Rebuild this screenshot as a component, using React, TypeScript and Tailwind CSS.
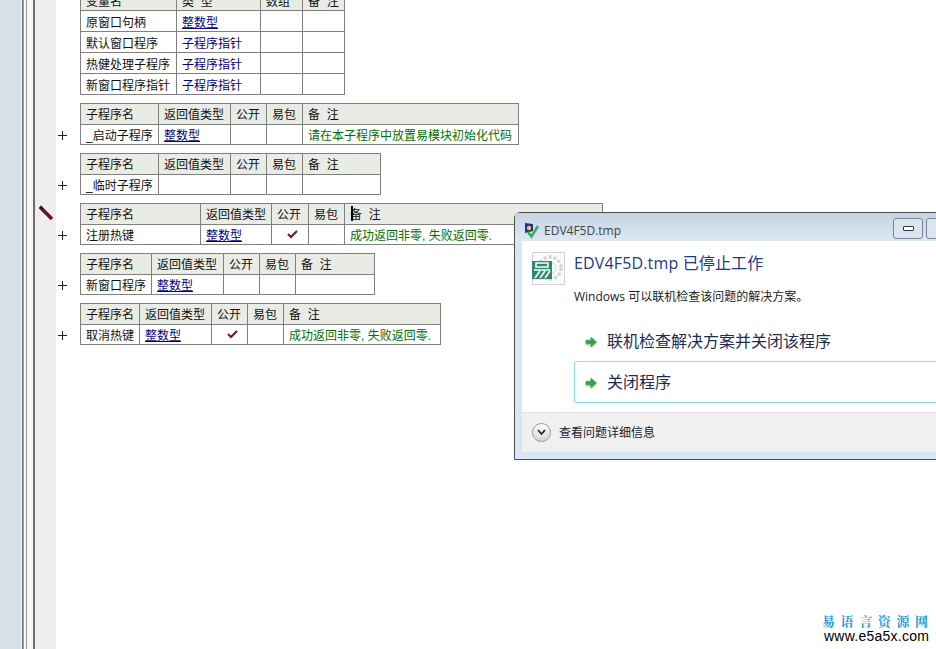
const font = "font-['Liberation_Sans','Noto_Sans_CJK_SC',sans-serif]";

type Cell = { text?: string; kind?: "type" | "typeLink" | "note" | "check" };

function Plus() {
  return (
    <svg width="9" height="9" viewBox="0 0 9 9" className="mb-[5px] ml-[2px]">
      <path d="M0 4.500h9M4.500 0v9" stroke="#1a1a5e" strokeWidth="1" />
    </svg>
  );
}

function Check() {
  return (
    <svg width="11" height="9" viewBox="0 0 11 9" className="mx-auto -mt-[2px]">
      <path d="M1 4l3 3 6-6" fill="none" stroke="#6e1420" strokeWidth="2" />
    </svg>
  );
}

function CellBody({ cell }: { cell: Cell }) {
  if (cell.kind === "check") return <Check />;
  if (cell.kind === "typeLink") return <span className="text-[#000080] underline">{cell.text}</span>;
  if (cell.kind === "type") return <span className="text-[#000080]">{cell.text}</span>;
  if (cell.kind === "note") return <span className="text-[#007000]">{cell.text}</span>;
  return <span>{cell.text}</span>;
}

function Grid({ cols, head, rows, pad }: { cols: string[]; head: string[]; rows: Cell[][]; pad: string }) {
  return (
    <table className="table-fixed border-collapse text-[12px] leading-none text-[#111]">
      <colgroup>
        {cols.map((c, i) => (
          <col key={i} className={c} />
        ))}
      </colgroup>
      <thead>
        <tr className="h-[21px] bg-[#e8ece5]">
          {head.map((h, i) => (
            <th key={i} className={`overflow-hidden border border-[#808080] pl-[5px] text-left font-normal whitespace-pre ${pad}`}>
              {h}
            </th>
          ))}
        </tr>
      </thead>
      <tbody>
        {rows.map((r, i) => (
          <tr key={i} className={rows.length > 1 ? "h-[21px]" : "h-[20px]"}>
            {r.map((c, j) => (
              <td key={j} className={`overflow-hidden border border-[#808080] pl-[5px] whitespace-pre ${pad}`}>
                <CellBody cell={c} />
              </td>
            ))}
          </tr>
        ))}
      </tbody>
    </table>
  );
}

const subHead = ["子程序名", "返回值类型", "公开", "易包", "备  注"];
const success = "成功返回非零, 失败返回零.";

const blocks = [
  {
    cols: ["w-[78px]", "w-[72px]", "w-[36px]", "w-[36px]", "w-[216px]"],
    name: "_启动子程序",
    pub: false,
    note: "请在本子程序中放置易模块初始化代码",
    type: "整数型",
  },
  {
    cols: ["w-[78px]", "w-[72px]", "w-[36px]", "w-[36px]", "w-[78px]"],
    name: "_临时子程序",
    pub: false,
    note: "",
    type: "",
  },
  {
    cols: ["w-[120px]", "w-[71px]", "w-[37px]", "w-[36px]", "w-[258px]"],
    name: "注册热键",
    pub: true,
    note: success,
    type: "整数型",
  },
  {
    cols: ["w-[71px]", "w-[72px]", "w-[36px]", "w-[36px]", "w-[79px]"],
    name: "新窗口程序",
    pub: false,
    note: "",
    type: "整数型",
  },
  {
    cols: ["w-[59px]", "w-[72px]", "w-[36px]", "w-[36px]", "w-[157px]"],
    name: "取消热键",
    pub: true,
    note: success,
    type: "整数型",
  },
];

function Rail() {
  return (
    <div className="flex h-full shrink-0">
      <div className="w-[21px] bg-[#d8e0ea]" />
      <div className="w-[1px] bg-[#f7f7f7]" />
      <div className="w-[1px] bg-[#6e6e6e]" />
      <div className="w-[1px] bg-[#a0a0a0]" />
      <div className="w-[2px] bg-[#fbfbfb]" />
      <div className="w-[1px] bg-[#9a9a9a]" />
      <div className="w-[6px] bg-[#f6f8f6]" />
      <div className="w-[2px] bg-[#6e6e6e]" />
      <div className="w-[21px] bg-[#eeeeee]" />
    </div>
  );
}

function Pencil() {
  return (
    <svg width="16" height="16" viewBox="0 0 16 16" className="absolute top-[205px] left-[38px]">
      <path d="M2 2l12 12" stroke="#6a1018" strokeWidth="3.600" />
      <path d="M2 1.500l3 3" stroke="#222" strokeWidth="2.600" />
    </svg>
  );
}

function AppIcon() {
  return (
    <svg width="33" height="33" viewBox="0 0 33 33" className="shrink-0">
      <rect x="0.500" y="0.500" width="32" height="32" fill="#fbfbfb" stroke="#d2d2d2" />
      <circle cx="18" cy="16" r="11" fill="none" stroke="#d4d4d4" strokeWidth="3.500" strokeDasharray="3 2" />
      <circle cx="18" cy="16" r="6" fill="none" stroke="#e2e2e2" strokeWidth="1.500" />
      <rect x="0" y="9" width="20" height="18" fill="#2a8a72" />
      <path d="M4 11h12v4H4z" fill="none" stroke="#fff" strokeWidth="1.500" />
      <path d="M2 18h16M3 26l5-7M8 26l5-7M13 26l5-7" fill="none" stroke="#fff" strokeWidth="1.700" />
    </svg>
  );
}

function TitleIcon() {
  return (
    <svg width="16" height="16" viewBox="0 0 16 16" className="shrink-0">
      <path d="M1 0l8 1v7l-8 2z" fill="#1f2f96" />
      <circle cx="5" cy="5" r="2.200" fill="#f2c53a" />
      <path d="M4 9l3.500 4.500L14 3" fill="none" stroke="#3fae5a" strokeWidth="2.600" />
    </svg>
  );
}

function GreenArrow() {
  return (
    <svg width="12" height="12" viewBox="0 0 12 12" className="shrink-0 drop-shadow-[0_1px_1px_rgba(0,0,0,0.3)]">
      <path d="M1 4.200h5V1.200L11.500 6 6 10.800V7.800H1z" fill="#2aa84a" stroke="#2aa84a" strokeWidth="0.600" />
    </svg>
  );
}

function Dialog() {
  return (
    <div className="absolute top-[212px] left-[514px] flex h-[248px] w-[520px] flex-col rounded-t-[6px] border border-[#4f4f4f] bg-[#d8e6f4]">
      <div className="flex h-[28px] shrink-0 items-center bg-gradient-to-b from-[#c5d3e1] to-[#dde8f3] pt-[7px] pl-[9px]">
        <TitleIcon />
        <span className="ml-[4px] font-['Open_Sans',sans-serif] text-[12px] text-[#444]">EDV4F5D.tmp</span>
        <div className="ml-[272px] flex gap-[3px]">
          <div className="-mt-[4px] flex h-[21px] w-[30px] items-center justify-center rounded-[3px] border border-[#76879a] bg-[#dbe5ef]">
            <div className="h-[5px] w-[11px] rounded-[1px] border border-[#333] bg-white" />
          </div>
          <div className="-mt-[4px] h-[21px] w-[30px] rounded-[3px] border border-[#76879a] bg-[#dbe5ef]" />
        </div>
      </div>
      <div className="mx-[7px] flex flex-1 flex-col overflow-hidden bg-white">
        <div className="flex h-[171px] shrink-0 flex-col pl-[10px]">
          <div className="flex pt-[11px]">
            <AppIcon />
            <div className="pl-[9px]">
              <div className="pt-[1px] font-['Open_Sans','Noto_Sans_CJK_SC',sans-serif] text-[16px] leading-[20px] tracking-[0.15px] text-[#1a3a8c]">
                EDV4F5D.tmp 已停止工作
              </div>
              <div className="pt-[16px] font-['Open_Sans','Noto_Sans_CJK_SC',sans-serif] text-[12px] leading-[16px] text-[#222]">
                Windows 可以联机检查该问题的解决方案。
              </div>
            </div>
          </div>
          <div className="box-content flex h-[41px] items-center pt-[16px] pl-[53px]">
            <GreenArrow />
            <span className="ml-[10px] text-[16px] text-[#1c2b58]">联机检查解决方案并关闭该程序</span>
          </div>
          <div className="-mt-[1px] ml-[42px] flex h-[42px] shrink-0 items-center rounded-[2px] border border-[#86dfe6] pt-[1px] pl-[10px]">
            <GreenArrow />
            <span className="ml-[10px] text-[16px] text-[#1c2b58]">关闭程序</span>
          </div>
        </div>
        <div className="flex flex-1 items-center border-t border-[#e6e0e8] bg-[#f0f0f0] pl-[10px]">
          <div className="flex h-[19px] w-[19px] items-center justify-center rounded-full border border-[#9a9a9a] bg-gradient-to-b from-white to-[#d4d4d4]">
            <svg width="9" height="7" viewBox="0 0 9 7">
              <path d="M1 1l3.500 4L8 1" fill="none" stroke="#222" strokeWidth="1.800" />
            </svg>
          </div>
          <span className="ml-[8px] text-[12px] text-[#222]">查看问题详细信息</span>
        </div>
      </div>
      <div className="h-[7px] shrink-0" />
    </div>
  );
}

export default function App() {
  return (
    <div className={`relative flex h-[649px] w-[936px] overflow-hidden bg-white ${font}`}>
      <Rail />
      <div className="-mt-[11px] flex flex-col gap-[8px]">
        <div className="ml-[24px]">
          <Grid
            pad="pt-[4px]"
            cols={["w-[96px]", "w-[84px]", "w-[42px]", "w-[42px]"]}
            head={["变量名", "类  型", "数组", "备  注"]}
            rows={[
              [{ text: "原窗口句柄" }, { text: "整数型", kind: "typeLink" }, {}, {}],
              [{ text: "默认窗口程序" }, { text: "子程序指针", kind: "type" }, {}, {}],
              [{ text: "热健处理子程序" }, { text: "子程序指针", kind: "type" }, {}, {}],
              [{ text: "新窗口程序指针" }, { text: "子程序指针", kind: "type" }, {}, {}],
            ]}
          />
        </div>
        {blocks.map((b, i) => (
          <div key={i} className="flex items-end">
            <div className="flex w-[24px] shrink-0">
              <Plus />
            </div>
            <Grid
              pad="pt-[2px]"
              cols={b.cols}
              head={subHead}
              rows={[
                [
                  { text: b.name },
                  { text: b.type, kind: "typeLink" },
                  b.pub ? { kind: "check" } : {},
                  {},
                  { text: b.note, kind: "note" },
                ],
              ]}
            />
          </div>
        ))}
      </div>
      <Pencil />
      <div className="absolute top-[206px] left-[351px] h-[15px] w-[2px] bg-black" />
      <Dialog />
      <div className="absolute top-[614px] left-[822px] whitespace-nowrap leading-none">
        <div className="font-['Noto_Serif_CJK_SC','Noto_Sans_CJK_SC',serif] text-[13px] font-bold tracking-[5.6px] text-[#2a9ad6]">
          易语言资源网
        </div>
        <div className="pt-[2px] pl-[2px] text-[14px] tracking-[0.25px] text-black">www.e5a5x.com</div>
      </div>
    </div>
  );
}
